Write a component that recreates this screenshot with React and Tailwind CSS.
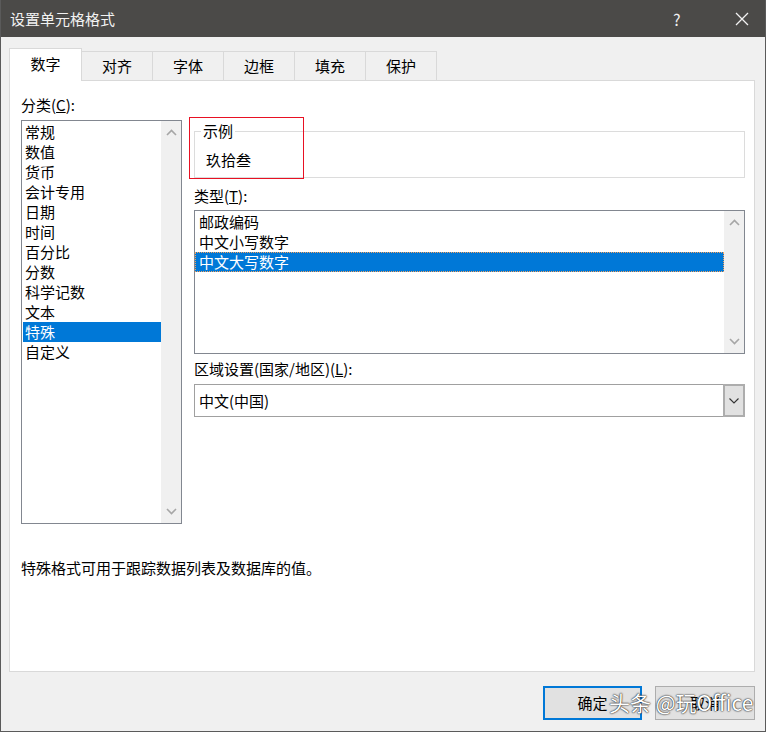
import React from "react";

const font = { fontFamily: '"Microsoft YaHei UI", "Noto Sans CJK SC", "Liberation Sans", sans-serif' };

const categories = ["常规", "数值", "货币", "会计专用", "日期", "时间", "百分比", "分数", "科学记数", "文本", "特殊", "自定义"];
const types = ["邮政编码", "中文小写数字", "中文大写数字"];
const tabs = ["对齐", "字体", "边框", "填充", "保护"];

const Chevron = ({ up }) => (
  <svg width="11" height="7" viewBox="0 0 11 7" className="block">
    <path
      d={up ? "M1 6 L5.5 1.5 L10 6" : "M1 1 L5.5 5.5 L10 1"}
      fill="none"
      stroke="#a6a6a6"
      strokeWidth="1.6"
    />
  </svg>
);

const ScrollBar = () => (
  <div className="w-[20px] shrink-0 bg-[#f0f0f0] flex flex-col justify-between items-center py-[8px]">
    <Chevron up />
    <Chevron />
  </div>
);

export default function App() {
  return (
    <div
      className="w-[766px] h-[732px] bg-[#f0f0f0] border-x border-b border-[#5a5a5a] flex flex-col text-[15px] leading-[20px] text-black relative overflow-hidden"
      style={font}
    >
      {/* title bar */}
      <div className="h-[37px] shrink-0 bg-[#4b4a48] -mx-[1px] flex items-center pl-[10px] text-[#f2f2f2]">
        <span className="flex-1">设置单元格格式</span>
        <span className="w-[16px] text-[16px] mr-[46px]">?</span>
        <svg width="14" height="14" viewBox="0 0 14 14" className="mr-[17px]">
          <path d="M1 1 L13 13 M13 1 L1 13" stroke="#f2f2f2" strokeWidth="1.3" />
        </svg>
      </div>

      <div className="flex-1 flex flex-col pl-[8px] pr-[10px] pt-[11px]">
        {/* tabs */}
        <div className="flex items-end h-[32px] relative z-10">
          <div className="w-[73px] h-[33px] -mb-[1px] bg-white border-t border-x border-[#d9d9d9] flex items-center justify-center pb-[2px]">
            数字
          </div>
          {tabs.map((t) => (
            <div
              key={t}
              className="w-[71px] h-[29px] border-t border-r border-[#d9d9d9] flex items-center justify-center"
            >
              {t}
            </div>
          ))}
        </div>

        {/* panel */}
        <div className="h-[592px] bg-white border border-[#d9d9d9] flex flex-col">
          <div className="flex pl-[11px] pt-[14px] h-[443px]">
            {/* category */}
            <div className="w-[161px] flex flex-col">
              <div>
                分类(<span className="underline">C</span>):
              </div>
              <div className="mt-[5px] h-[404px] border border-[#828790] flex">
                <div className="flex-1 pt-[1px] pl-[1px]">
                  {categories.map((c) => (
                    <div
                      key={c}
                      className={
                        c === "特殊"
                          ? "h-[20px] pl-[2px] bg-[#0078d7] text-white"
                          : "h-[20px] pl-[2px]"
                      }
                    >
                      {c}
                    </div>
                  ))}
                </div>
                <ScrollBar />
              </div>
            </div>

            {/* right column */}
            <div className="ml-[12px] w-[551px] flex flex-col pt-[36px]">
              <div className="relative h-[47px] border border-[#dcdcdc]">
                <span className="absolute left-[6px] -top-[11px] bg-white px-[2px]">示例</span>
                <span className="absolute left-[11px] top-[18px]">玖拾叁</span>
                <div className="absolute -left-[6px] -top-[15px] w-[115px] h-[62px] border border-[#e81123]" />
              </div>

              <div className="mt-[8px]">
                类型(<span className="underline">T</span>):
              </div>
              <div className="mt-[4px] h-[144px] border border-[#828790] flex">
                <div className="flex-1 pt-[1px]">
                  {types.map((t) => (
                    <div
                      key={t}
                      className={
                        t === "中文大写数字"
                          ? "h-[20px] pl-[3px] bg-[#0078d7] text-white border border-dotted border-[#f7a35c] leading-[18px]"
                          : "h-[20px] pl-[4px]"
                      }
                    >
                      {t}
                    </div>
                  ))}
                </div>
                <ScrollBar />
              </div>

              <div className="mt-[5px]">
                区域设置(国家/地区)(<span className="underline">L</span>):
              </div>
              <div className="mt-[5px] h-[33px] border border-[#a0a0a0] flex">
                <div className="flex-1 flex items-center pl-[4px]">中文(中国)</div>
                <div className="w-[22px] bg-[#e1e1e1] border-2 border-[#adadad] -m-[1px] flex items-center justify-center">
                  <svg width="10" height="6" viewBox="0 0 10 6">
                    <path d="M0.5 0.5 L5 5 L9.5 0.5" fill="none" stroke="#333" strokeWidth="1.1" />
                  </svg>
                </div>
              </div>
            </div>
          </div>

          <div className="mt-[34px] pl-[11px]">特殊格式可用于跟踪数据列表及数据库的值。</div>
        </div>

        {/* buttons */}
        <div className="flex justify-end gap-[13px] mt-[14px]">
          <button className="w-[99px] h-[34px] border-2 border-[#0078d7] bg-[#e1e1e1] text-[15px]" style={font}>
            确定
          </button>
          <button className="w-[100px] h-[34px] border border-[#adadad] bg-[#e1e1e1] text-[15px]" style={font}>
            取消
          </button>
        </div>
      </div>

      {/* watermark */}
      <span
        className="absolute left-[608px] top-[689px] text-[21px] leading-[26px] text-white [text-shadow:0_0_2px_#222,0_0_1px_#000]"
        style={{ fontFamily: '"Noto Sans CJK SC", "Liberation Sans", sans-serif' }}
      >
        头条 @玩Office
      </span>
    </div>
  );
}
